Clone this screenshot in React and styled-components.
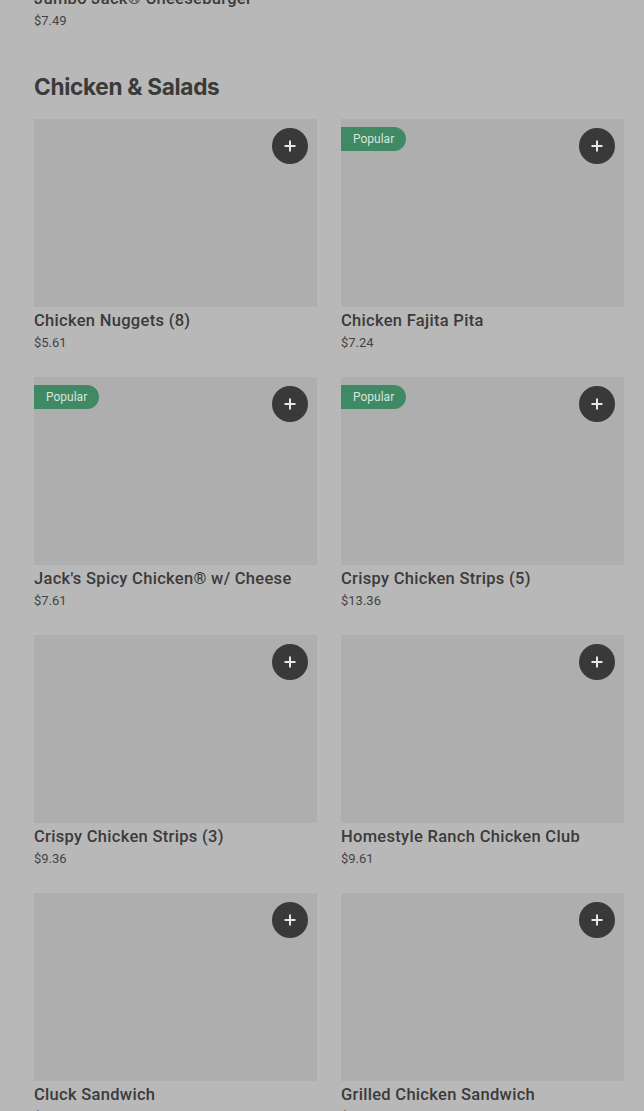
import React from "react";
import styled, { createGlobalStyle } from "styled-components";

const GlobalStyle = createGlobalStyle`
  html, body {
    margin: 0;
    padding: 0;
    background: #b8b8b8;
    font-family: Roboto, "Liberation Sans", sans-serif;
    overflow: hidden;
  }
`;

const Page = styled.div`
  padding: 0 20px 0 34px;
  margin-top: -11px;
`;

const PrevItem = styled.div`
  display: flex;
  flex-direction: column;
`;

const SectionTitle = styled.h2`
  font-family: Inter, "Liberation Sans", sans-serif;
  font-size: 22.6px;
  font-weight: 700;
  letter-spacing: -0.3px;
  line-height: 30px;
  color: #3a3a3a;
  margin: 42px 0 17px;
`;

const Grid = styled.div`
  display: grid;
  grid-template-columns: 283px 283px;
  column-gap: 24px;
  row-gap: 25px;
`;

const Card = styled.div`
  display: flex;
  flex-direction: column;
`;

const Thumb = styled.div`
  position: relative;
  height: 188px;
  background: #aeaeae;
  margin-bottom: 4px;
`;

const Badge = styled.span`
  position: absolute;
  left: 0;
  top: 8px;
  height: 24px;
  padding: 0 12px;
  display: flex;
  align-items: center;
  background: #3f8a64;
  color: #d6e6dc;
  font-size: 12px;
  border-radius: 0 12px 12px 0;
`;

const AddButton = styled.button`
  position: absolute;
  right: 9px;
  top: 9px;
  width: 36px;
  height: 36px;
  border: none;
  border-radius: 50%;
  background: #393939;
  display: flex;
  align-items: center;
  justify-content: center;
  padding: 0;
`;

const Name = styled.div`
  font-size: 16.5px;
  font-weight: 500;
  letter-spacing: 0.3px;
  line-height: 20px;
  color: #3b3b3b;
`;

const Price = styled.div`
  font-size: 13px;
  line-height: 18px;
  margin-top: 3px;
  color: #444;
`;

const items = [
  { name: "Chicken Nuggets (8)", price: "$5.61" },
  { name: "Chicken Fajita Pita", price: "$7.24", popular: true },
  { name: "Jack's Spicy Chicken® w/ Cheese", price: "$7.61", popular: true },
  { name: "Crispy Chicken Strips (5)", price: "$13.36", popular: true },
  { name: "Crispy Chicken Strips (3)", price: "$9.36" },
  { name: "Homestyle Ranch Chicken Club", price: "$9.61" },
  { name: "Cluck Sandwich", price: "$6.86" },
  { name: "Grilled Chicken Sandwich", price: "$8.74" },
];

const PlusIcon = () => (
  <svg width="14" height="14" viewBox="0 0 14 14">
    <path d="M7 1.5v11M1.5 7h11" stroke="#e6e6e6" strokeWidth="2" />
  </svg>
);

export default function App() {
  return (
    <Page>
      <GlobalStyle />
      <PrevItem>
        <Name>Jumbo Jack® Cheeseburger</Name>
        <Price>$7.49</Price>
      </PrevItem>
      <SectionTitle>Chicken &amp; Salads</SectionTitle>
      <Grid>
        {items.map(item => (
          <Card key={item.name}>
            <Thumb>
              {item.popular && <Badge>Popular</Badge>}
              <AddButton aria-label="Add">
                <PlusIcon />
              </AddButton>
            </Thumb>
            <Name>{item.name}</Name>
            <Price>{item.price}</Price>
          </Card>
        ))}
      </Grid>
    </Page>
  );
}
